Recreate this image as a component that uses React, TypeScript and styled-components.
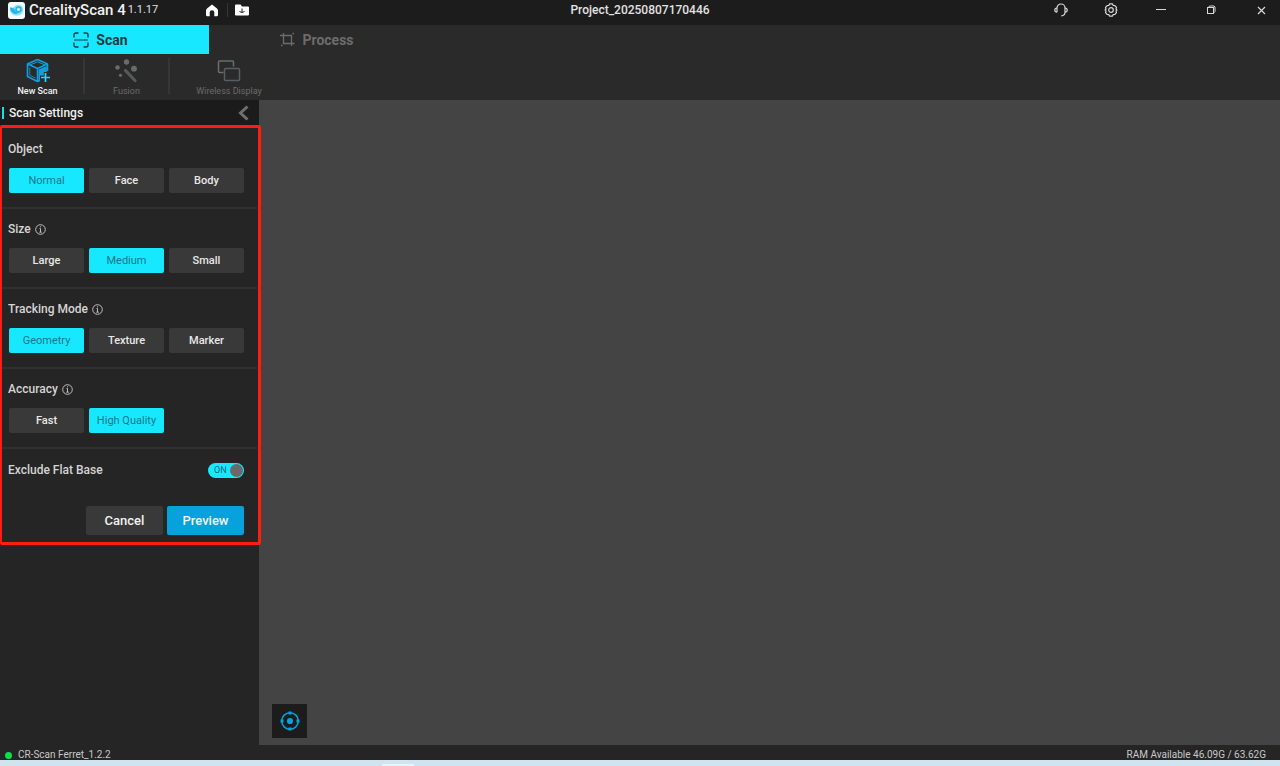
import React, { useState } from "react";
import styled, { createGlobalStyle } from "styled-components";

const GlobalStyle = createGlobalStyle`
  *, *::before, *::after { box-sizing: border-box; }
  body {
    margin: 0;
    background: #252525;
    font-family: Roboto, "Liberation Sans", sans-serif;
    color: #e2e2e2;
  }
  button { font-family: inherit; border: 0; padding: 0; margin: 0; background: none; color: inherit; cursor: pointer; }
  svg { display: block; flex: none; }
`;

const Page = styled.div`
  display: flex;
  flex-direction: column;
  min-height: 100vh;
`;

const TitleBar = styled.header`
  display: grid;
  grid-template-columns: 1fr auto 1fr;
  align-items: center;
  height: 25px;
  padding-bottom: 5px;
  background: #1c1c1c;
`;

const Brand = styled.div`
  display: flex;
  align-items: center;
  padding-left: 8px;
  height: 20px;
`;

const BrandName = styled.h1`
  margin: 0 2px 0 4px;
  font-size: 15px;
  line-height: 20px;
  font-weight: 500;
  color: #f0f0f0;
`;

const Version = styled.span`
  width: 77px;
  font-size: 11px;
  line-height: 20px;
`;

const ProjectName = styled.span`
  font-size: 12px;
  line-height: 20px;
  font-weight: 500;
`;

const IconButton = styled.button`
  display: flex;
  align-items: center;
  justify-content: center;
  width: 15px;
  height: 20px;
  color: #fff;
`;

const BrandDivider = styled.span`
  width: 1px;
  height: 14px;
  margin: 0 7px;
  background: #363636;
`;

const WindowControls = styled.div`
  display: flex;
  justify-content: flex-end;
  gap: 12px;
`;

const WindowButton = styled(IconButton)`
  width: 38px;
  color: #d8d8d8;
`;

const Tabs = styled.nav`
  display: flex;
  height: 29px;
  background: #2a2a2a;
`;

const Tab = styled.button<{ $active?: boolean }>`
  display: flex;
  align-items: center;
  justify-content: center;
  gap: 7px;
  width: ${(p) => (p.$active ? 209 : 216)}px;
  padding-right: ${(p) => (p.$active ? 8 : 0)}px;
  background: ${(p) => (p.$active ? "#18e8ff" : "transparent")};
  color: ${(p) => (p.$active ? "#123c42" : "#6c6c6c")};
  font-size: 14px;
  line-height: 20px;
  font-weight: 700;
`;

const Toolbar = styled.div`
  display: flex;
  height: 46px;
  padding-top: 4px;
  background: #2a2a2a;
`;

const Tool = styled.button<{ $wide?: boolean; $enabled?: boolean }>`
  display: flex;
  flex-direction: column;
  align-items: center;
  gap: 2px;
  width: ${(p) => (p.$wide ? 118 : 83)}px;
  padding-right: ${(p) => (p.$enabled ? 8 : 0)}px;
  font-size: 9px;
  line-height: 12px;
  font-weight: ${(p) => (p.$enabled ? 500 : 400)};
  white-space: nowrap;
  color: ${(p) => (p.$enabled ? "#f2f2f2" : "#6a6a6a")};
`;

const ToolDivider = styled.span`
  width: 2px;
  height: 36px;
  background: #363636;
`;

const Body = styled.div`
  display: flex;
  flex: 1;
`;

const Sidebar = styled.aside`
  width: 259px;
  flex: none;
  background: #252525;
`;

const PanelHeader = styled.div`
  display: flex;
  align-items: center;
  justify-content: space-between;
  height: 25px;
  padding: 1px 8px 0 2px;
  background: #1b1b1b;
`;

const PanelTitle = styled.h2`
  margin: 0;
  padding-left: 5px;
  border-left: 2px solid #18d9ee;
  font-size: 12px;
  line-height: 12px;
  font-weight: 500;
  color: #f0f0f0;
`;

const SettingsForm = styled.form`
  position: relative;
  padding: 4px 0 10px;
`;

/* The frame runs past the panel edge, over the viewport. */
const Highlight = styled.div`
  position: absolute;
  inset: 0 -2px 0 0;
  border: 3px solid #ff1d12;
  border-left-width: 2px;
  border-radius: 2px;
  pointer-events: none;
`;

const Section = styled.fieldset`
  margin: 0 2px 0 0;
  padding: 10px 13px 14px 8px;
  border: 0;
  border-bottom: 2px solid #303030;
  min-width: 0;
`;

const SectionTitle = styled.legend`
  display: flex;
  align-items: center;
  gap: 4px;
  float: left;
  width: 100%;
  margin: 0 0 9px;
  padding: 0;
  font-size: 12px;
  line-height: 20px;
  font-weight: 500;
  color: #d4d4d4;
`;

const Options = styled.div`
  clear: both;
  display: grid;
  grid-template-columns: repeat(3, 1fr);
  gap: 5px;
  padding-left: 1px;
`;

const Option = styled.label`
  display: flex;
  align-items: center;
  justify-content: center;
  height: 25px;
  border-radius: 2px;
  background: #393939;
  color: #e8e8e8;
  font-size: 11px;
  line-height: 16px;
  font-weight: 500;
  cursor: pointer;
  &:has(input:checked) {
    background: #18e8ff;
    color: #147984;
    font-weight: 400;
  }
`;

const HiddenInput = styled.input`
  appearance: none;
  width: 0;
  height: 0;
  margin: 0;
`;

const SwitchRow = styled.label`
  display: flex;
  align-items: center;
  justify-content: space-between;
  height: 42px;
  padding: 0 15px 0 8px;
  font-size: 12px;
  line-height: 20px;
  font-weight: 500;
  color: #d4d4d4;
  cursor: pointer;
`;

const Switch = styled.span<{ $on: boolean }>`
  display: flex;
  flex-direction: ${(p) => (p.$on ? "row" : "row-reverse")};
  align-items: center;
  justify-content: space-between;
  width: 36px;
  height: 15px;
  padding: 0 1px 0 6px;
  border-radius: 8px;
  background: ${(p) => (p.$on ? "#18e8ff" : "#444")};
  color: ${(p) => (p.$on ? "#126a74" : "#aaa")};
  font-size: 9px;
  line-height: 12px;
  font-weight: 400;
`;

const Knob = styled.span`
  width: 13px;
  height: 13px;
  border-radius: 50%;
  background: #6a6a6a;
`;

const Actions = styled.div`
  display: flex;
  justify-content: flex-end;
  gap: 4px;
  padding: 15px 15px 0 0;
`;

const ActionButton = styled.button<{ $primary?: boolean }>`
  width: 77px;
  height: 29px;
  border-radius: 2px;
  background: ${(p) => (p.$primary ? "#05a2dc" : "#393939")};
  color: #f2f2f2;
  font-size: 13px;
  line-height: 20px;
  font-weight: 500;
`;

const Viewport = styled.main`
  display: flex;
  flex: 1;
  align-items: flex-end;
  padding: 0 0 7px 13px;
  background: #444;
`;

const LocateButton = styled.button`
  display: flex;
  align-items: center;
  justify-content: center;
  width: 35px;
  height: 34px;
  background: #1c1c1c;
  color: #05a2dc;
`;

const StatusBar = styled.footer`
  display: flex;
  align-items: center;
  justify-content: space-between;
  height: 15px;
  padding: 5px 14px 0 5px;
  background: #252525;
  font-size: 10px;
  line-height: 10px;
  color: #c8c8c8;
`;

const Device = styled.span`
  display: flex;
  align-items: center;
  gap: 6px;
  &::before {
    content: "";
    width: 7px;
    height: 7px;
    border-radius: 50%;
    background: #0be04b;
  }
`;

const Taskbar = styled.div`
  display: flex;
  align-items: flex-end;
  height: 6px;
  padding-left: 382px;
  background: #cfe4ee;
`;

const TaskbarItem = styled.span`
  width: 32px;
  height: 2px;
  border-radius: 2px 2px 0 0;
  background: #eaf3f8;
`;

const Logo = () => (
  <svg width="17" height="17" viewBox="0 0 34 34">
    <rect width="34" height="34" rx="6" fill="#f5fbfd" />
    <path d="M4 11c3 1 6 0 8-1 4-6 13-6 17 0 3 6 1 13-5 16-5 2-10 2-14 0-5-3-7-9-6-15z" fill="#8fe3f8" />
    <path d="M4 11c4 1 7 0 9 3 1 5 5 8 9 7-4 4-9 3-12 1-4-2-6-6-6-11z" fill="#27b0ea" />
    <circle cx="21" cy="15" r="5" fill="none" stroke="#1fb4ec" strokeWidth="3" />
    <circle cx="21" cy="15" r="2.500" fill="#e2f8ff" />
  </svg>
);

const HomeIcon = () => (
  <svg width="12" height="13" viewBox="0 0 12 13" fill="currentColor">
    <path d="M6 .5 11 4.6Q12 5.4 12 6.6V11q0 1.2-1.2 1.2H8.3V8.5a2.3 2.3 0 0 0-4.6 0v3.7H1.2Q0 12.2 0 11V6.6Q0 5.4 1 4.6z" />
  </svg>
);

const FolderIcon = () => (
  <svg width="14" height="12" viewBox="0 0 14 12">
    <path d="M1 .5h4.500l1.500 2h6q1 0 1 1v7q0 1-1 1H1q-1 0-1-1v-9q0-1 1-1z" fill="currentColor" />
    <path d="M7 4.500V8M4.500 7.500q2.500 2 5 0" fill="none" stroke="#1c1c1c" />
  </svg>
);

const HeadsetIcon = () => (
  <svg width="14" height="14" viewBox="0 0 14 14" fill="none" stroke="currentColor" strokeWidth="1.2">
    <path d="M3 9.2V5a4 4 0 0 1 8 0v4.2c0 2-1.3 3.4-3.8 3.8" />
    <path d="M3 5C1.500 5 .8 5.900.8 7.100S1.500 9.200 3 9.200M11 5c1.500 0 2.200.9 2.200 2.100S12.500 9.200 11 9.200" />
  </svg>
);

const GearIcon = () => (
  <svg width="14" height="14" viewBox="0 0 14 14" fill="none" stroke="currentColor" strokeWidth="1.2" strokeLinejoin="round">
    <path d="M5.500.9h3l.7 1.500 1.700.2 1.600 1.700-.5 1.700.9 1-.9 1 .5 1.700-1.600 1.700-1.700.2-.7 1.500h-3l-.7-1.500-1.700-.2-1.600-1.700.5-1.700-.9-1 .9-1-.5-1.700 1.600-1.700 1.700-.2z" />
    <circle cx="7" cy="7" r="2.300" />
  </svg>
);

const MinimizeIcon = () => (
  <svg width="10" height="10" viewBox="0 0 10 10"><path d="M0 4.500h10" stroke="currentColor" /></svg>
);

const RestoreIcon = () => (
  <svg width="10" height="10" viewBox="0 0 10 10" fill="none" stroke="currentColor">
    <rect x="1.500" y="2.500" width="6" height="6" />
    <path d="M2.500 2.500 3.500 1h4.500l1 1v4.500l-1.500 1.500" />
  </svg>
);

const CloseIcon = () => (
  <svg width="9" height="9" viewBox="0 0 9 9"><path d="m1 1 7 7M8 1 1 8" stroke="currentColor" strokeWidth="1.2" /></svg>
);

const ScanIcon = () => (
  <svg width="16" height="16" viewBox="0 0 16 16" fill="none" stroke="currentColor" strokeWidth="1.4">
    <path d="M1 5.500V3q0-2 2-2h2.500M10.500 1H13q2 0 2 2v2.500M15 10.500V13q0 2-2 2h-2.500M5.500 15H3q-2 0-2-2v-2.500" />
    <path d="M1 8h14" strokeWidth="1" />
  </svg>
);

const ProcessIcon = () => (
  <svg width="15" height="15" viewBox="0 0 15 15" fill="none" stroke="currentColor" strokeWidth="1.3">
    <path d="M3.500 1v10.500H14.500M0 3.500h11.500V14" />
    <path d="M12.500 1.500h1.500M1 13.500h1.500" strokeWidth="1.500" />
  </svg>
);

const NewScanIcon = () => (
  <svg width="26" height="25" viewBox="0 0 26 25" fill="none" stroke="#129fdc" strokeWidth="1.6" strokeLinejoin="round">
    <path d="M12.500 1.500 22.500 6v7M12.500 1.500 2.500 6v12.500l10 5 2.500-1.200M2.500 6l10 4.500 10-4.500M12.500 10.500v13" />
    <path d="m5 7 7.500-3.200L20 7" strokeWidth="1" />
    <path d="M4.800 9.500v7.700l6 3" strokeWidth=".8" />
    <path d="M13.500 11.500 21.800 8v6h-3v3.500H15v4.300l-1.500.7z" fill="#129fdc" stroke="none" />
    <path d="M20.500 15v9M16 19.500h9" stroke="#1bdcf4" strokeWidth="1.7" />
  </svg>
);

const FusionIcon = () => (
  <svg width="25" height="25" viewBox="0 0 25 25" fill="#6a6a6a">
    <circle cx="12.500" cy="4" r="2.700" />
    <circle cx="3.500" cy="9.500" r="2.300" />
    <circle cx="20" cy="10.700" r="2.900" />
    <circle cx="6.500" cy="17.300" r="1.600" />
    <path d="m11.500 12.500 9.500 10" stroke="#545a5a" strokeWidth="3.2" strokeLinecap="round" />
  </svg>
);

const DisplayIcon = () => (
  <svg width="24" height="25" viewBox="0 0 24 25" fill="none" stroke="#6a6e6e" strokeWidth="1.5">
    <path d="M6.500 14.500H2.500q-1 0-1-1V4q0-1 1-1h13q1 0 1 1v4.500" />
    <rect x="7.500" y="10.500" width="15" height="12" rx="1" stroke="#566060" />
  </svg>
);

const CollapseIcon = () => (
  <svg width="11" height="16" viewBox="0 0 11 16"><path d="M9.500 1.500 2.500 8l7 6.500" fill="none" stroke="#6f6f6f" strokeWidth="3" /></svg>
);

const InfoIcon = () => (
  <svg width="11" height="11" viewBox="0 0 11 11" fill="none" stroke="#bebebe">
    <circle cx="5.500" cy="5.500" r="4.800" />
    <path d="M4.500 4.500h1V8M4.300 8.200h2.500M5 2.800h1" />
  </svg>
);

const TargetIcon = () => (
  <svg width="20" height="20" viewBox="0 0 20 20" fill="none" stroke="currentColor">
    <circle cx="10" cy="10" r="8.300" strokeWidth="1.5" />
    <circle cx="10" cy="10" r="3.100" fill="currentColor" stroke="none" />
    <path d="M10 .5v3M10 16.500v3M.5 10h3M16.500 10h3" strokeWidth="3" />
  </svg>
);

type Group = { name: string; info?: boolean; options: string[]; initial: string };

const groups: Group[] = [
  { name: "Object", options: ["Normal", "Face", "Body"], initial: "Normal" },
  { name: "Size", info: true, options: ["Large", "Medium", "Small"], initial: "Medium" },
  { name: "Tracking Mode", info: true, options: ["Geometry", "Texture", "Marker"], initial: "Geometry" },
  { name: "Accuracy", info: true, options: ["Fast", "High Quality"], initial: "High Quality" },
];

const OptionGroup = ({ name, info, options, initial }: Group) => (
  <Section>
    <SectionTitle>
      {name}
      {info && <InfoIcon />}
    </SectionTitle>
    <Options>
      {options.map((o) => (
        <Option key={o}>
          <HiddenInput type="radio" name={name} value={o} defaultChecked={o === initial} />
          {o}
        </Option>
      ))}
    </Options>
  </Section>
);

export default function App() {
  const [exclude, setExclude] = useState(true);
  return (
    <Page>
      <GlobalStyle />
      <TitleBar>
        <Brand>
          <Logo />
          <BrandName>CrealityScan 4</BrandName>
          <Version>1.1.17</Version>
          <IconButton aria-label="Home"><HomeIcon /></IconButton>
          <BrandDivider />
          <IconButton aria-label="Open project"><FolderIcon /></IconButton>
        </Brand>
        <ProjectName>Project_20250807170446</ProjectName>
        <WindowControls>
          <WindowButton aria-label="Support"><HeadsetIcon /></WindowButton>
          <WindowButton aria-label="Settings"><GearIcon /></WindowButton>
          <WindowButton aria-label="Minimize"><MinimizeIcon /></WindowButton>
          <WindowButton aria-label="Restore"><RestoreIcon /></WindowButton>
          <WindowButton aria-label="Close"><CloseIcon /></WindowButton>
        </WindowControls>
      </TitleBar>
      <Tabs>
        <Tab $active><ScanIcon />Scan</Tab>
        <Tab><ProcessIcon />Process</Tab>
      </Tabs>
      <Toolbar>
        <Tool $enabled><NewScanIcon />New Scan</Tool>
        <ToolDivider />
        <Tool><FusionIcon />Fusion</Tool>
        <ToolDivider />
        <Tool $wide><DisplayIcon />Wireless Display</Tool>
      </Toolbar>
      <Body>
        <Sidebar>
          <PanelHeader>
            <PanelTitle>Scan Settings</PanelTitle>
            <IconButton aria-label="Collapse panel"><CollapseIcon /></IconButton>
          </PanelHeader>
          <SettingsForm onSubmit={(e) => e.preventDefault()}>
            {groups.map((g) => (
              <OptionGroup key={g.name} {...g} />
            ))}
            <SwitchRow>
              Exclude Flat Base
              <HiddenInput type="checkbox" checked={exclude} onChange={(e) => setExclude(e.target.checked)} />
              <Switch $on={exclude}>
                {exclude ? "ON" : "OFF"}
                <Knob />
              </Switch>
            </SwitchRow>
            <Actions>
              <ActionButton type="button">Cancel</ActionButton>
              <ActionButton type="submit" $primary>Preview</ActionButton>
            </Actions>
            <Highlight />
          </SettingsForm>
        </Sidebar>
        <Viewport>
          <LocateButton aria-label="Center view"><TargetIcon /></LocateButton>
        </Viewport>
      </Body>
      <StatusBar>
        <Device>CR-Scan Ferret_1.2.2</Device>
        <span>RAM Available 46.09G / 63.62G</span>
      </StatusBar>
      <Taskbar><TaskbarItem /></Taskbar>
    </Page>
  );
}
